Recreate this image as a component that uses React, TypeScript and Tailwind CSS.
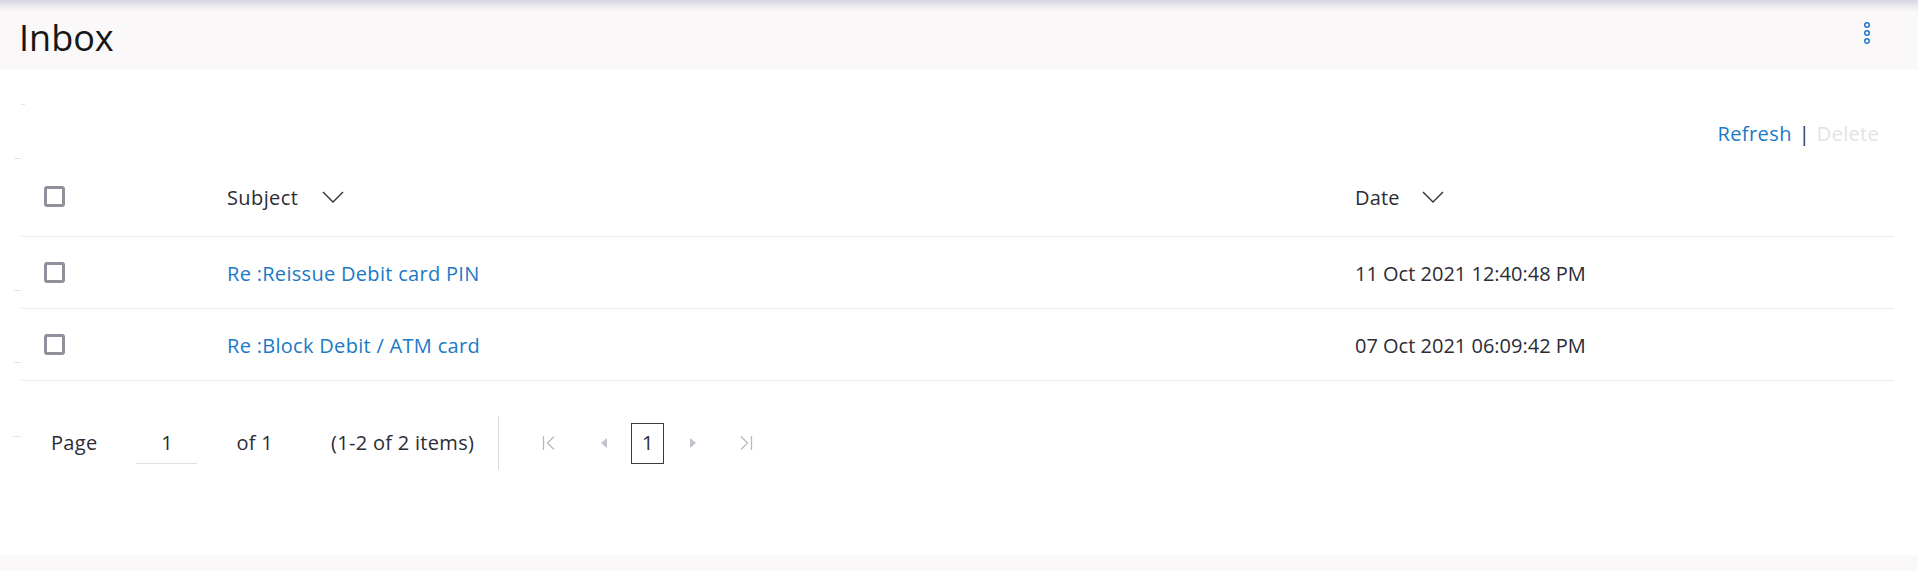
import type { ReactNode } from "react";

const messages = [
  { subject: "Re :Reissue Debit card PIN", date: "11 Oct 2021 12:40:48 PM" },
  { subject: "Re :Block Debit / ATM card", date: "07 Oct 2021 06:09:42 PM" },
];

const Checkbox = () => (
  <span className="block h-[21px] w-[21px] rounded-[3px] border-[3px] border-[#908f9b] bg-white" />
);

const SortIcon = () => (
  <svg width="22" height="12" viewBox="0 0 22 12" fill="none">
    <path d="M1 1l10 10L21 1" stroke="#2c2c36" strokeWidth="1.3" />
  </svg>
);

const KebabIcon = () => (
  <svg width="10" height="22" viewBox="0 0 10 22" fill="none" stroke="#1f7ad0" strokeWidth="1.5">
    <circle cx="5" cy="3" r="2.3" />
    <circle cx="5" cy="11" r="2.3" />
    <circle cx="5" cy="19" r="2.3" />
  </svg>
);

// little tick marks in the left gutter
const Gutter = ({ offset }: { offset: string }) => (
  <div className={`w-[21px] shrink-0 ${offset}`}>
    <div className="ml-[14px] h-px w-[7px] bg-[#e4e4e6]" />
  </div>
);

const Row = ({ offset, className, children }: { offset: string; className: string; children: ReactNode }) => (
  <div className="flex">
    <Gutter offset={offset} />
    <div className={`mr-[24px] grid flex-1 grid-cols-[206px_1128px_1fr] items-center border-b border-[#ebebed] ${className}`}>
      {children}
    </div>
  </div>
);

const FirstIcon = () => (
  <svg width="14" height="16" viewBox="0 0 14 16" fill="none" stroke="#b9b9c2" strokeWidth="1.3">
    <path d="M1.5 1v14" />
    <path d="M12 1.5L5.5 8l6.5 6.5" />
  </svg>
);

const LastIcon = () => (
  <svg width="14" height="16" viewBox="0 0 14 16" fill="none" stroke="#b9b9c2" strokeWidth="1.3">
    <path d="M12.5 1v14" />
    <path d="M2 1.5L8.5 8 2 14.5" />
  </svg>
);

const PrevIcon = () => (
  <svg width="6" height="10" viewBox="0 0 6 10">
    <path d="M6 0v10L0 5z" fill="#c3c3cb" />
  </svg>
);

const NextIcon = () => (
  <svg width="6" height="10" viewBox="0 0 6 10">
    <path d="M0 0v10l6-5z" fill="#c3c3cb" />
  </svg>
);

export default function App() {
  return (
    <div className="flex h-[571px] w-full flex-col bg-white font-['Open_Sans','Noto_Sans',sans-serif] text-[20px] text-[#2c2c36]">
      <header className="h-[70px] shrink-0 bg-[#faf8f9]">
        <div className="h-[12px] bg-gradient-to-b from-[#d8d5e1] via-[#ecEAf0] to-[#faf8f9]" />
        <div className="flex items-start justify-between pl-[19px] pr-[46px]">
          <h1 className="mt-[8px] text-[36px] leading-none font-normal text-[#161616]">Inbox</h1>
          <button className="mt-[10px]">
            <KebabIcon />
          </button>
        </div>
      </header>

      <main className="flex-1">
        <div className="h-[40px] pt-[34px]">
          <div className="ml-[21px] h-px w-[4px] bg-[#e4e4e6]" />
        </div>

        <div className="flex h-[46px] items-center justify-end gap-[7px] pt-[1px] pr-[39px] leading-none">
          <span className="tracking-[0.4px] text-[#1b79c6]">Refresh</span>
          <span className="text-[#333]">|</span>
          <span className="tracking-[0.3px] text-[#e3e3e6]">Delete</span>
        </div>

        <Row offset="pt-[2px]" className="h-[81px]">
          <div className="pl-[23px]">
            <Checkbox />
          </div>
          <div className="mt-[4px] flex items-center">
            <span className="tracking-[0.4px]">Subject</span>
            <span className="ml-[24px] -mt-[2px]">
              <SortIcon />
            </span>
          </div>
          <div className="mt-[4px] flex items-center">
            <span className="tracking-[0.2px]">Date</span>
            <span className="ml-[22px] -mt-[2px]">
              <SortIcon />
            </span>
          </div>
        </Row>

        {messages.map((m) => (
          <Row key={m.subject} offset="pt-[53px]" className="h-[72px]">
            <div className="pl-[23px]">
              <Checkbox />
            </div>
            <span className="mt-[2px] tracking-[0.3px] text-[#1b79c6]">{m.subject}</span>
            <span className="mt-[2px]">{m.date}</span>
          </Row>
        ))}

        <div className="mt-[35px] flex h-[54px] items-center">
          <div className="w-[51px] shrink-0 self-start pt-[20px]">
            <div className="ml-[13px] h-px w-[8px] bg-[#e4e4e6]" />
          </div>
          <span className="tracking-[0.3px]">Page</span>
          <div className="ml-[39px] flex h-[42px] w-[61px] items-center justify-center border-b border-[#e0e0e2]">
            1
          </div>
          <span className="ml-[39px] tracking-[0.3px]">of 1</span>
          <span className="ml-[58px] tracking-[0.3px]">(1-2 of 2 items)</span>
          <div className="ml-[24px] w-px self-stretch bg-[#dcdce0]" />
          <span className="ml-[43px] flex">
            <FirstIcon />
          </span>
          <span className="ml-[45px] flex">
            <PrevIcon />
          </span>
          <span className="ml-[24px] flex h-[41px] w-[33px] items-center justify-center border border-[#3a3a3a]">
            1
          </span>
          <span className="ml-[26px] flex">
            <NextIcon />
          </span>
          <span className="ml-[43px] flex">
            <LastIcon />
          </span>
        </div>
      </main>

      <div className="h-[16px] shrink-0 bg-[#faf8f9]" />
    </div>
  );
}
